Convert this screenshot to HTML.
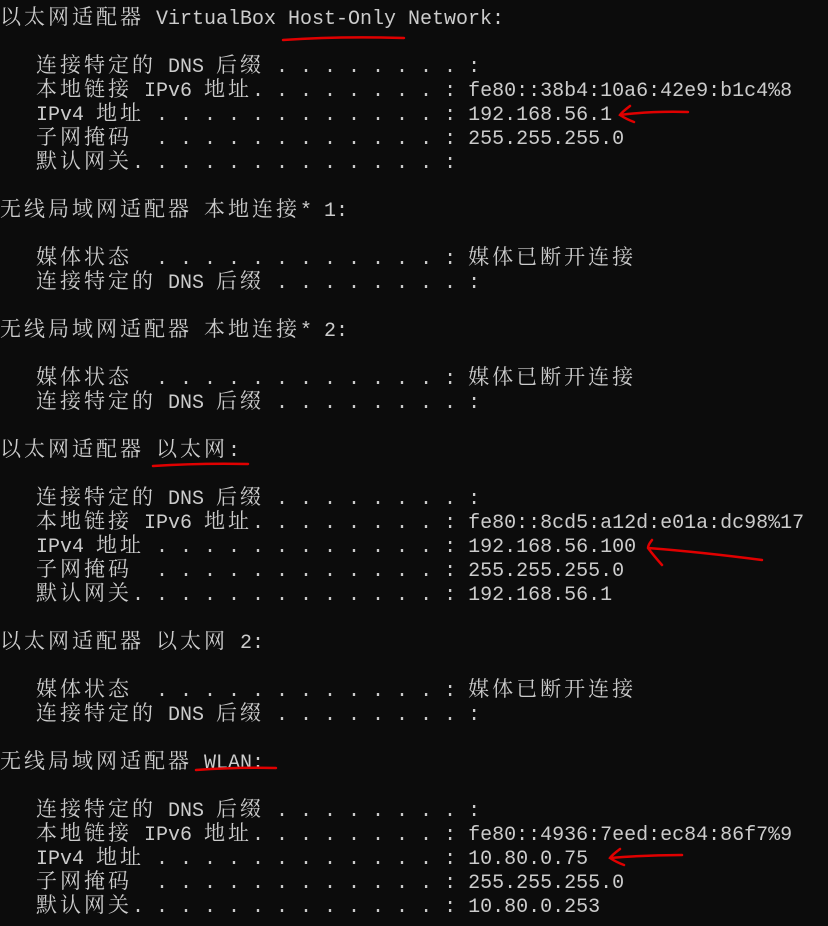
<!DOCTYPE html>
<html><head><meta charset="utf-8"><style>
html,body{margin:0;padding:0;background:#0c0c0c;width:828px;height:926px;overflow:hidden}
#t{position:absolute;left:0px;top:8px;font-family:"Liberation Mono",monospace;font-size:20px;color:#cccccc;white-space:normal}
#t div{height:24px;line-height:24px;overflow:visible;white-space:pre}
b{font-weight:normal;font-size:21px;letter-spacing:3px;font-family:"Noto Serif CJK SC","Noto Sans CJK SC",serif;line-height:0;vertical-align:baseline}
svg{position:absolute;left:0;top:0}
</style></head><body>
<div id="t">
<div><b>以太网适配器</b> VirtualBox Host-Only Network:</div>
<div></div>
<div>   <b>连接特定的</b> DNS <b>后缀</b> . . . . . . . . :</div>
<div>   <b>本地链接</b> IPv6 <b>地址</b>. . . . . . . . : fe80::38b4:10a6:42e9:b1c4%8</div>
<div>   IPv4 <b>地址</b> . . . . . . . . . . . . : 192.168.56.1</div>
<div>   <b>子网掩码</b>  . . . . . . . . . . . . : 255.255.255.0</div>
<div>   <b>默认网关</b>. . . . . . . . . . . . . :</div>
<div></div>
<div><b>无线局域网适配器</b> <b>本地连接</b>* 1:</div>
<div></div>
<div>   <b>媒体状态</b>  . . . . . . . . . . . . : <b>媒体已断开连接</b></div>
<div>   <b>连接特定的</b> DNS <b>后缀</b> . . . . . . . . :</div>
<div></div>
<div><b>无线局域网适配器</b> <b>本地连接</b>* 2:</div>
<div></div>
<div>   <b>媒体状态</b>  . . . . . . . . . . . . : <b>媒体已断开连接</b></div>
<div>   <b>连接特定的</b> DNS <b>后缀</b> . . . . . . . . :</div>
<div></div>
<div><b>以太网适配器</b> <b>以太网</b>:</div>
<div></div>
<div>   <b>连接特定的</b> DNS <b>后缀</b> . . . . . . . . :</div>
<div>   <b>本地链接</b> IPv6 <b>地址</b>. . . . . . . . : fe80::8cd5:a12d:e01a:dc98%17</div>
<div>   IPv4 <b>地址</b> . . . . . . . . . . . . : 192.168.56.100</div>
<div>   <b>子网掩码</b>  . . . . . . . . . . . . : 255.255.255.0</div>
<div>   <b>默认网关</b>. . . . . . . . . . . . . : 192.168.56.1</div>
<div></div>
<div><b>以太网适配器</b> <b>以太网</b> 2:</div>
<div></div>
<div>   <b>媒体状态</b>  . . . . . . . . . . . . : <b>媒体已断开连接</b></div>
<div>   <b>连接特定的</b> DNS <b>后缀</b> . . . . . . . . :</div>
<div></div>
<div><b>无线局域网适配器</b> WLAN:</div>
<div></div>
<div>   <b>连接特定的</b> DNS <b>后缀</b> . . . . . . . . :</div>
<div>   <b>本地链接</b> IPv6 <b>地址</b>. . . . . . . . : fe80::4936:7eed:ec84:86f7%9</div>
<div>   IPv4 <b>地址</b> . . . . . . . . . . . . : 10.80.0.75</div>
<div>   <b>子网掩码</b>  . . . . . . . . . . . . : 255.255.255.0</div>
<div>   <b>默认网关</b>. . . . . . . . . . . . . : 10.80.0.253</div>
</div>
<svg width="828" height="926" fill="none" stroke="#e00000" stroke-width="2.5" stroke-linecap="round">
<path d="M283 40 Q340 36 404 38"/>
<path d="M688 112 Q650 111 620 115 M630 106 Q622 112 620 115 Q626 119 634 122"/>
<path d="M153 466 Q200 463 248 464"/>
<path d="M762 560 Q700 552 648 548 M652 540 Q648 545 648 548 Q654 556 662 565"/>
<path d="M196 770 Q236 767 276 768"/>
<path d="M682 855 Q645 855 610 858 M620 849 Q612 855 610 858 Q616 862 624 865"/>
</svg>
</body></html>
